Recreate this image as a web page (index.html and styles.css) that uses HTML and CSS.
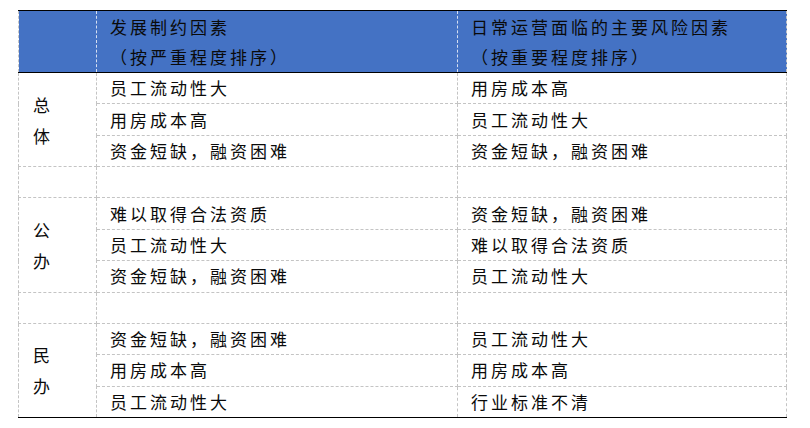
FILE: index.html
```html
<!DOCTYPE html>
<html lang="zh">
<head>
<meta charset="utf-8">
<link rel="stylesheet" href="styles.css">
</head>
<body>
<table class="factors">
  <colgroup>
    <col class="c-group">
    <col class="c-dev">
    <col class="c-risk">
  </colgroup>
  <thead>
    <tr class="head">
      <th></th>
      <th>发展制约因素<br>（按严重程度排序）</th>
      <th>日常运营面临的主要风险因素<br>（按重要程度排序）</th>
    </tr>
  </thead>
  <tbody>
    <tr>
      <td class="group" rowspan="3">总<br>体</td>
      <td>员工流动性大</td>
      <td>用房成本高</td>
    </tr>
    <tr><td>用房成本高</td><td>员工流动性大</td></tr>
    <tr><td>资金短缺，融资困难</td><td>资金短缺，融资困难</td></tr>
    <tr class="gap"><td></td><td></td><td></td></tr>
    <tr>
      <td class="group" rowspan="3">公<br>办</td>
      <td>难以取得合法资质</td>
      <td>资金短缺，融资困难</td>
    </tr>
    <tr><td>员工流动性大</td><td>难以取得合法资质</td></tr>
    <tr><td>资金短缺，融资困难</td><td>员工流动性大</td></tr>
    <tr class="gap"><td></td><td></td><td></td></tr>
    <tr>
      <td class="group bottom" rowspan="3">民<br>办</td>
      <td>资金短缺，融资困难</td>
      <td>员工流动性大</td>
    </tr>
    <tr><td>用房成本高</td><td>用房成本高</td></tr>
    <tr class="last"><td>员工流动性大</td><td>行业标准不清</td></tr>
  </tbody>
</table>
</body>
</html>
```

FILE: styles.css
```css
html, body {
  margin: 0;
  padding: 0;
  background: #ffffff;
}

body {
  font-family: "Noto Sans CJK SC", "Noto Sans", sans-serif;
  font-size: 17px;
  color: #0a0a0a;
}

.factors {
  margin: 10px 0 0 18px;
  border-collapse: collapse;
  table-layout: fixed;
  width: 768px;
}

.c-group { width: 78px; }
.c-dev { width: 361px; }
.c-risk { width: 329px; }

.factors th,
.factors td {
  padding: 0 0 0 13px;
  text-align: left;
  vertical-align: middle;
  letter-spacing: 3px;
  font-weight: normal;
  border-left: 1px dashed #c4c4c4;
  border-right: 1px dashed #c4c4c4;
  border-bottom: 1px dashed #c4c4c4;
  line-height: 26px;
  height: 30.36px;
  white-space: nowrap;
}

.head th {
  background: #4472c4;
  border-top: 1px solid #000000;
  border-bottom: 1px solid #000000;
  border-left: 1px dashed #d6dff2;
  border-right: 1px dashed #d6dff2;
  line-height: 30px;
  height: 61px;
  color: #0a0a0a;
}

.head th:first-child { border-left-color: #c4c4c4; }
.head th:last-child { border-right-color: #c4c4c4; }

.factors td.group {
  padding-left: 14px;
  line-height: 31px;
}

.last td,
.factors td.group.bottom {
  border-bottom: 1px solid #000000;
}
```
